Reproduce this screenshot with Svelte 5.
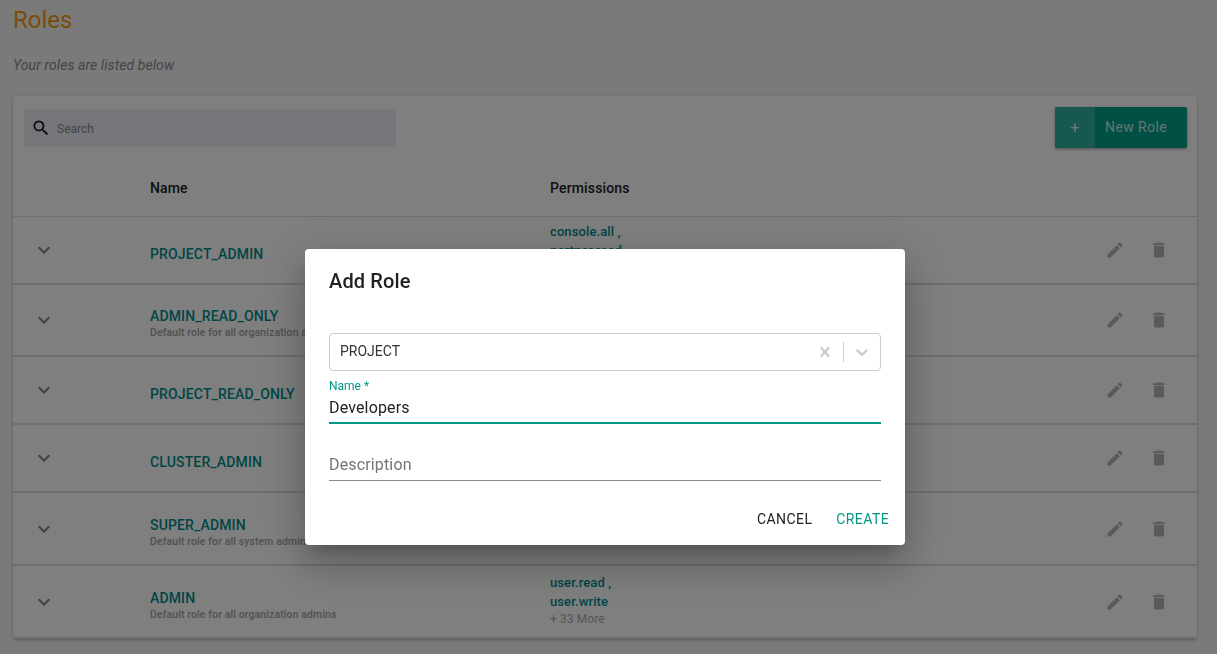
<script>
  const roles = [
    { name: 'PROJECT_ADMIN', h: 68, perms: ['console.all ,', 'partner.read'], more: '+ 12 More' },
    { name: 'ADMIN_READ_ONLY', desc: 'Default role for all organization admins', h: 72 },
    { name: 'PROJECT_READ_ONLY', h: 68 },
    { name: 'CLUSTER_ADMIN', h: 68 },
    { name: 'SUPER_ADMIN', desc: 'Default role for all system admins', h: 73 },
    { name: 'ADMIN', desc: 'Default role for all organization admins', h: 73, perms: ['user.read ,', 'user.write'], more: '+ 33 More' }
  ];
</script>

<div class="page">
  <h1>Roles</h1>
  <p class="sub">Your roles are listed below</p>

  <section class="card">
    <div class="toolbar">
      <div class="search">
        <svg viewBox="0 0 24 24" width="20" height="20"><path d="M15.5 14h-.79l-.28-.27A6.47 6.47 0 0 0 16 9.5 6.5 6.5 0 1 0 9.5 16c1.61 0 3.09-.59 4.23-1.57l.27.28v.79l5 4.99L20.49 19l-4.99-5zm-6 0C7.01 14 5 11.99 5 9.5S7.01 5 9.5 5 14 7.01 14 9.5 11.99 14 9.5 14z"/></svg>
        <span>Search</span>
      </div>
      <div class="new">
        <span class="plus">+</span>
        <span class="label">New Role</span>
      </div>
    </div>
    <div class="head">
      <span></span><span>Name</span><span>Permissions</span>
    </div>
    {#each roles as r}
      <div class="row" style="height:{r.h}px">
        <svg class="chev" viewBox="0 0 24 24" width="24" height="24"><path d="M16.59 8.59 12 13.17 7.41 8.59 6 10l6 6 6-6z"/></svg>
        <div class="who" class:plain={!r.desc}>
          <div class="name">{r.name}</div>
          {#if r.desc}<div class="desc">{r.desc}</div>{/if}
        </div>
        <div class="perms">
          {#if r.perms}
            {#each r.perms as p}<div class="perm">{p}</div>{/each}
            <div class="more">{r.more}</div>
          {/if}
        </div>
        <div class="acts">
          <svg viewBox="0 0 24 24" width="20" height="20"><path d="M3 17.25V21h3.75L17.81 9.94l-3.75-3.75L3 17.25zM20.71 7.04a1 1 0 0 0 0-1.41l-2.34-2.34a1 1 0 0 0-1.41 0l-1.83 1.83 3.75 3.75 1.83-1.83z"/></svg>
          <svg viewBox="0 0 24 24" width="20" height="20"><path d="M6 19c0 1.1.9 2 2 2h8c1.1 0 2-.9 2-2V7H6v12zM19 4h-3.5l-1-1h-5l-1 1H5v2h14V4z"/></svg>
        </div>
      </div>
    {/each}
  </section>
</div>

<div class="overlay">
  <div class="dialog">
    <h2>Add Role</h2>
    <div class="select">
      <span class="val">PROJECT</span>
      <svg class="x" viewBox="0 0 20 20" width="20" height="20"><path d="M14.348 14.849a1.2 1.2 0 0 1-1.697 0L10 11.819l-2.651 3.029a1.2 1.2 0 1 1-1.697-1.697l2.758-3.15-2.759-3.152a1.2 1.2 0 1 1 1.697-1.697L10 8.183l2.651-3.031a1.2 1.2 0 1 1 1.697 1.697l-2.758 3.152 2.758 3.15a1.2 1.2 0 0 1 0 1.698z"/></svg>
      <i class="sep"></i>
      <svg class="down" viewBox="0 0 20 20" width="20" height="20"><path d="M4.516 7.548c.436-.446 1.043-.481 1.576 0L10 11.295l3.908-3.747c.533-.481 1.141-.446 1.574 0 .436.445.408 1.197 0 1.615-.406.418-4.695 4.502-4.695 4.502a1.095 1.095 0 0 1-1.576 0S4.924 9.581 4.516 9.163c-.409-.418-.436-1.17 0-1.615z"/></svg>
    </div>
    <div class="field active">
      <label for="n">Name *</label>
      <div id="n" class="input">Developers</div>
    </div>
    <div class="field desc-field">
      <div class="input ph">Description</div>
    </div>
    <div class="actions">
      <span>CANCEL</span>
      <span class="create">CREATE</span>
    </div>
  </div>
</div>

<style>
  :global(body) { margin: 0; background: #f5f5f5; font-family: Roboto, "Liberation Sans", sans-serif; overflow: hidden; }
  .page { padding: 0 20px 0 13px; height: 654px; box-sizing: border-box; overflow: hidden; }
  h1 { margin: 0; padding-top: 6px; font-size: 24px; font-weight: 400; line-height: 29px; color: #f59a10; }
  .sub { margin: 21px 0 0; font-size: 14px; font-style: italic; line-height: 18px; letter-spacing: .08px; color: #888; height: 40px; }
  .card { background: #fff; border-radius: 4px; box-shadow: 0 1px 3px rgba(0,0,0,.3); width: 1184px; }
  .toolbar { display: flex; justify-content: space-between; align-items: flex-start; padding: 13px 10px 0 11px; height: 48px; }
  .search { width: 365px; height: 38px; background: #eaedf3; border-radius: 3px; display: flex; align-items: center; padding-left: 7px; gap: 6px; }
  .search svg { fill: #111; }
  .search span { font-size: 12px; color: #888; margin-top: 1px; }
  .new { display: flex; height: 41px; width: 132px; background: #00a08c; color: rgba(255,255,255,.8); border-radius: 2px; box-shadow: 0 1px 3px rgba(0,0,0,.4); overflow: hidden; font-size: 14px; letter-spacing: .4px; align-items: stretch; margin-top: -2px; }
  .plus { width: 40px; background: #2fb3a0; display: flex; align-items: center; justify-content: center; font-size: 16px; }
  .label { flex: 1; display: flex; align-items: center; padding: 0 0 2px 10px; }
  .head { display: grid; grid-template-columns: 137px 400px 1fr; height: 60px; box-sizing: border-box; padding-top: 3px; align-items: center; font-size: 14px; font-weight: 500; letter-spacing: .15px; color: #222; border-bottom: 1px solid #ddd; }
  .row { display: grid; grid-template-columns: 137px 400px 1fr auto; border-bottom: 2px solid #ddd; box-sizing: border-box; align-items: center; overflow: hidden; }
  .chev { fill: #808080; margin-left: 19px; }
  .who { margin-top: 8px; }
  .name { font-size: 14px; font-weight: 500; letter-spacing: .15px; color: #008c8c; line-height: 17px; }
  .desc { font-size: 10.4px; font-weight: 500; letter-spacing: .15px; color: #a0a0a0; line-height: 15px; }
  .perms { font-size: 13px; letter-spacing: .1px; margin-top: -2px; }
  .perm { font-weight: 500; color: #008c8c; line-height: 19px; }
  .more { font-size: 12px; color: #aaa; line-height: 17px; }
  .acts { display: flex; gap: 24px; padding-right: 28px; }
  .acts svg { fill: #b5b5b5; }
  .overlay { position: fixed; inset: 0; background: rgba(0,0,0,.5); display: flex; align-items: flex-start; justify-content: center; }
  .dialog { width: 600px; height: 296px; margin-top: 249px; margin-left: -7px; background: #fff; border-radius: 4px; box-shadow: 0 11px 15px -7px rgba(0,0,0,.2), 0 24px 38px 3px rgba(0,0,0,.14), 0 9px 46px 8px rgba(0,0,0,.12); padding: 0 24px; box-sizing: border-box; display: flex; flex-direction: column; }
  h2 { margin: 0; padding-top: 19px; font-size: 20px; font-weight: 500; letter-spacing: .15px; line-height: 26px; color: #212121; }
  .select { margin-top: 39px; height: 38px; box-sizing: border-box; border: 1px solid #ccc; border-radius: 4px; display: flex; align-items: center; padding: 0 9px 0 10px; }
  .val { flex: 1; font-size: 14px; color: #333; margin-top: -2px; }
  .x { fill: #ccc; }
  .sep { width: 1px; height: 20px; background: #ccc; margin: 0 8px; }
  .down { fill: #ccc; margin-right: -1px; }
  .field { display: flex; flex-direction: column; }
  .active { margin-top: 7px; border-bottom: 2px solid #009688; height: 46px; box-sizing: border-box; }
  label { font-size: 12px; color: #009688; line-height: 16px; }
  .input { font-size: 16px; letter-spacing: .15px; line-height: 24px; color: #212121; }
  .active .input { margin-top: 2px; }
  .desc-field { margin-top: 28px; padding-top: 1px; border-bottom: 1px solid #8a8a8a; height: 29px; box-sizing: border-box; }
  .ph { color: #757575; }
  .actions { display: flex; justify-content: flex-end; gap: 24px; margin: 28px -8px 0 0; font-size: 14px; letter-spacing: .4px; color: #212121; line-height: 20px; }
  .create { color: #009688; }
</style>
